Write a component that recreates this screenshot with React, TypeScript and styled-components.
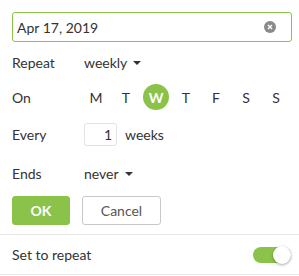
import React from "react";
import styled, { createGlobalStyle } from "styled-components";

const Global = createGlobalStyle`
  html, body { margin: 0; padding: 0; background: #fff; }
  body { font-family: Lato, "Open Sans", sans-serif; color: #333; }
  * { box-sizing: border-box; }
`;

const GREEN = "#8bc34a";

const Panel = styled.div`
  width: 299px;
  display: flex;
  flex-direction: column;
`;

const Body = styled.div`
  padding: 12px 7px 0 12px;
  display: flex;
  flex-direction: column;
`;

const DateField = styled.div`
  height: 30px;
  border: 1px solid ${GREEN};
  border-radius: 3px;
  display: flex;
  align-items: center;
  padding: 0 15px 0 4px;
  font-size: 14px;
  justify-content: space-between;
`;

const ClearIcon = styled.span`
  width: 12px;
  height: 12px;
  border-radius: 50%;
  background: #8a8a8a;
  display: flex;
  align-items: center;
  justify-content: center;
`;

const Row = styled.div<{ $h: number; $mt: number }>`
  display: flex;
  align-items: center;
  height: ${(p) => p.$h}px;
  margin-top: ${(p) => p.$mt}px;
  font-size: 14px;
`;

const Label = styled.div`
  width: 72px;
  flex: none;
`;

const Select = styled.div`
  display: flex;
  align-items: center;
  gap: 6px;
`;

const Caret = styled.span`
  width: 0;
  height: 0;
  border-left: 4px solid transparent;
  border-right: 4px solid transparent;
  border-top: 4px solid #333;
  margin-top: 1px;
`;

const Days = styled.div`
  display: flex;
  gap: 4px;
  margin-left: -1px;
`;

const Day = styled.div<{ $active?: boolean }>`
  width: 26px;
  height: 26px;
  border-radius: 50%;
  display: flex;
  align-items: center;
  justify-content: center;
  font-size: 14px;
  background: ${(p) => (p.$active ? GREEN : "transparent")};
  color: ${(p) => (p.$active ? "#fff" : "#333")};
  font-weight: ${(p) => (p.$active ? 700 : 400)};
`;

const NumBox = styled.div`
  width: 33px;
  height: 23px;
  border: 1px solid #e3e3e3;
  border-radius: 3px;
  display: flex;
  align-items: center;
  justify-content: flex-end;
  padding-right: 4px;
  margin-right: 8px;
`;

const Buttons = styled.div`
  display: flex;
  gap: 12px;
  margin-top: 11px;
`;

const Button = styled.button<{ $primary?: boolean }>`
  height: 29px;
  width: ${(p) => (p.$primary ? 58 : 79)}px;
  border-radius: 3px;
  font-family: Lato, sans-serif;
  font-size: 14px;
  padding: 0;
  border: 1px solid ${(p) => (p.$primary ? GREEN : "#c8c8c8")};
  background: ${(p) => (p.$primary ? GREEN : "#fff")};
  color: ${(p) => (p.$primary ? "#fff" : "#555")};
  font-weight: ${(p) => (p.$primary ? 700 : 400)};
`;

const Divider = styled.div<{ $mt: number }>`
  height: 1px;
  background: #e6e6e6;
  margin-top: ${(p) => p.$mt}px;
`;

const SetRow = styled.div`
  height: 39px;
  display: flex;
  align-items: center;
  justify-content: space-between;
  padding: 0 8px 0 12px;
  font-size: 14px;
`;

const Toggle = styled.div`
  position: relative;
  width: 38px;
  height: 16px;
  border-radius: 8px;
  background: ${GREEN};
`;

const Knob = styled.span`
  position: absolute;
  right: 0;
  top: -1px;
  width: 18px;
  height: 18px;
  border-radius: 50%;
  background: #fff;
  box-shadow: 0 1px 3px rgba(0, 0, 0, 0.35);
`;

const days = ["M", "T", "W", "T", "F", "S", "S"];

export default function App() {
  return (
    <Panel>
      <Global />
      <Body>
        <DateField>
          <span>Apr 17, 2019</span>
          <ClearIcon>
            <svg width="6" height="6" viewBox="0 0 6 6">
              <path d="M1 1L5 5M5 1L1 5" stroke="#fff" strokeWidth="1.4" />
            </svg>
          </ClearIcon>
        </DateField>
        <Row $h={24} $mt={8}>
          <Label>Repeat</Label>
          <Select>
            weekly <Caret />
          </Select>
        </Row>
        <Row $h={26} $mt={10}>
          <Label>On</Label>
          <Days>
            {days.map((d, i) => (
              <Day key={i} $active={i === 2}>
                {d}
              </Day>
            ))}
          </Days>
        </Row>
        <Row $h={23} $mt={13}>
          <Label>Every</Label>
          <NumBox>1</NumBox>
          weeks
        </Row>
        <Row $h={24} $mt={15}>
          <Label>Ends</Label>
          <Select>
            never <Caret />
          </Select>
        </Row>
        <Buttons>
          <Button $primary>OK</Button>
          <Button>Cancel</Button>
        </Buttons>
      </Body>
      <Divider $mt={9} />
      <SetRow>
        <span>Set to repeat</span>
        <Toggle>
          <Knob />
        </Toggle>
      </SetRow>
      <Divider $mt={0} />
    </Panel>
  );
}
